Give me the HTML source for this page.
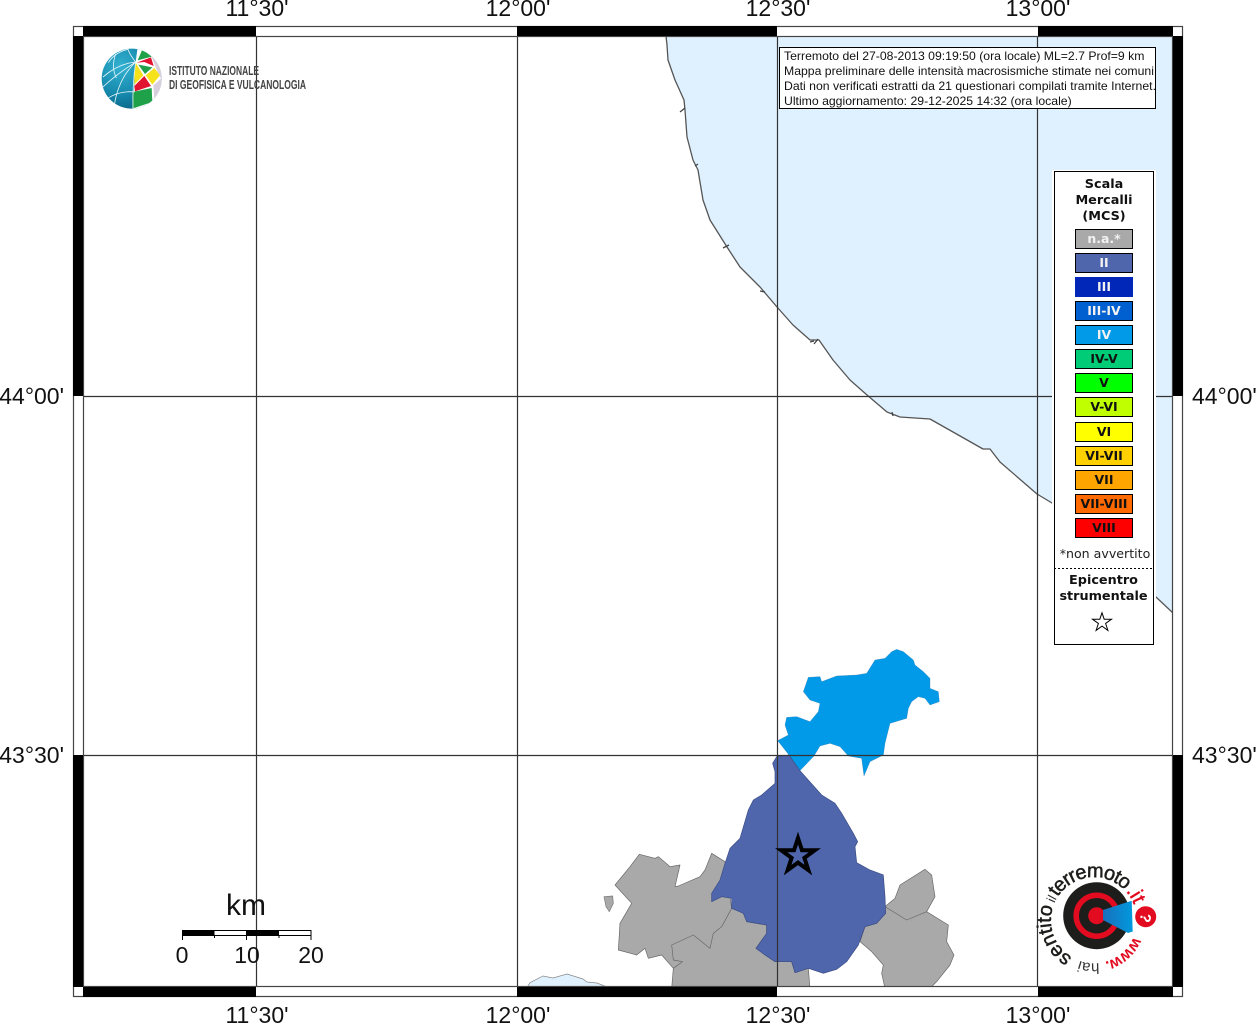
<!DOCTYPE html>
<html>
<head>
<meta charset="utf-8">
<style>
html,body{margin:0;padding:0;background:#fff;width:1256px;height:1024px;overflow:hidden}
svg{display:block}
text{font-family:"Liberation Sans",sans-serif}
.lab{font-size:23px;fill:#111}
.info{font-size:12.24px;fill:#111}
.dv{font-family:"DejaVu Sans",sans-serif;font-weight:bold;font-size:12.8px;fill:#111;text-anchor:middle}
.sw{font-family:"DejaVu Sans",sans-serif;font-weight:bold;font-size:12.5px;text-anchor:middle}
</style>
</head>
<body>
<svg width="1256" height="1024" viewBox="0 0 1256 1024" xmlns="http://www.w3.org/2000/svg">
<defs>
<clipPath id="map"><rect x="83" y="36" width="1090" height="951"/></clipPath>
<clipPath id="ib"><rect x="780" y="48" width="375.5" height="60"/></clipPath>
<radialGradient id="gl" cx=".32" cy=".3" r=".8"><stop offset="0" stop-color="#34b2d2"/><stop offset=".6" stop-color="#1487ab"/><stop offset="1" stop-color="#0a5f80"/></radialGradient>
<linearGradient id="wd" x1="0" y1="0" x2="1" y2="0"><stop offset="0" stop-color="#1a70bd"/><stop offset="1" stop-color="#0099dd"/></linearGradient>
<clipPath id="gc"><circle cx="110" cy="110" r="90"/></clipPath>
<path id="arcO" d="M1133.6 936.8 A43 43 0 1 1 1136.3 927.5"/>
</defs>

<rect width="1256" height="1024" fill="#fff"/>

<g clip-path="url(#map)">
<!-- Sea -->
<path fill="#dff1ff" d="M666 36L667 45L668 60L675 80L684 100L685 110L687 137L693 160L698 170L703 200L710 220L727 247L740 267L760 287L777 307L793 325L810 340L819 340L833 360L850 380L867 395L887 412L900 417L930 419L953 432L983 449L990 449L1000 462L1037 494L1052 503L1156 597L1173 613L1173 36Z"/>
<path fill="none" stroke="#555" stroke-width="1.3" stroke-linejoin="round" d="M666 36L667 45L668 60L675 80L684 100L685 110L687 137L693 160L698 170L703 200L710 220L727 247L740 267L760 287L777 307L793 325L810 340L819 340L833 360L850 380L867 395L887 412L900 417L930 419L953 432L983 449L990 449L1000 462L1037 494L1052 503L1156 597L1173 613"/>
<path fill="none" stroke="#444" stroke-width="1.3" d="M680 112L685 108M695 166L698 164M723 248L729 245M760 291L765 292M810 342L814 341M814 344L818 339M892 412L893 416"/>
<path fill="#dff1ff" stroke="#888" stroke-width=".7" d="M527.3 987L530 982.7L543 976L553 978L567 974L583 979L587 982L597 983L607 987Z"/>

<!-- Regions (zoom coordinates) -->
<g transform="translate(590 640) scale(.33333)" stroke-linejoin="round">
<path fill="#a9a9a9" stroke="#666" stroke-width="2" d="M148 643L195 655L205 650L240 680L270 675L255 740L265 738L330 710L345 690L365 640L405 665L425 805L460 810L470 845L530 855L530 880L498 925L555 965L605 965L615 998L655 985L660 1045L245 1045L250 985L215 945L175 955L165 925L140 945L85 930L90 850L125 790L75 735L120 680Z"/>
<path fill="none" stroke="#666" stroke-width="2" d="M425 805L395 860L370 880L360 925L310 885L245 915L250 960L278 965L250 985"/>
<path fill="#a9a9a9" stroke="#666" stroke-width="2" d="M885 800L915 775L930 735L1005 688L1025 705L1035 770L1010 815L1075 855L1070 905L1092 945L1080 975L1040 1025L1020 1045L885 1045L875 1000L880 975L845 935L810 905L825 860L860 850L887 820Z"/>
<path fill="none" stroke="#666" stroke-width="2" d="M885 800L950 840L1010 815"/>
<path fill="#a9a9a9" stroke="#777" stroke-width="2" d="M42 770L68 768L70 790L58 815L48 800Z"/>
<path fill="#009ae8" stroke="#3a7fb0" stroke-width="1" d="M920 28L940 35L970 60L975 75L1000 95L1020 115L1020 145L1045 155L1048 185L1020 195L1005 175L985 170L965 185L955 205L950 235L900 250L885 310L880 345L840 365L822 408L815 355L775 348L750 320L720 310L690 318L672 348L630 392L597 345L563 302L595 285L585 255L590 232L620 230L660 245L685 215L690 190L660 180L640 155L655 112L690 110L695 125L740 108L800 105L830 100L855 60L885 55L905 35Z"/>
<path fill="#4f66ad" stroke="#3a4c85" stroke-width="2" d="M597 345L630 392L695 465L735 490L755 520L790 580L803 605L795 620L800 668L840 690L880 705L885 770L887 820L860 850L825 860L805 915L770 965L740 988L700 1000L655 985L615 998L605 965L555 965L525 945L498 925L530 880L530 855L470 845L460 820L425 805L425 775L395 770L365 785L365 760L390 720L405 670L420 625L450 595L475 510L490 480L515 465L555 430L555 395L548 370L560 350Z"/>
</g>

<!-- Grid -->
<path fill="none" stroke="#333" stroke-width="1.2" d="M256.5 36V987M517.5 36V987M777.5 36V987M1037.5 36V987M83 396.5H1173M83 755.5H1173"/>
</g>

<!-- Frame -->
<rect x="73.5" y="26.5" width="1109" height="970" fill="none" stroke="#444" stroke-width="1.2"/>
<rect x="83.5" y="36.5" width="1089" height="950" fill="none" stroke="#444" stroke-width="1.2"/>
<g fill="#000">
<rect x="83" y="26" width="173" height="10"/><rect x="517" y="26" width="260" height="10"/><rect x="1038" y="26" width="135" height="10"/>
<rect x="83" y="987" width="173" height="10"/><rect x="517" y="987" width="260" height="10"/><rect x="1038" y="987" width="135" height="10"/>
<rect x="73" y="36" width="10" height="360"/><rect x="73" y="755" width="10" height="232"/>
<rect x="1173" y="36" width="10" height="360"/><rect x="1173" y="755" width="10" height="232"/>
</g>

<!-- Axis labels -->
<g class="lab" text-anchor="middle">
<text class="lab" x="257" y="16">11°30'</text><text class="lab" x="518" y="16">12°00'</text><text class="lab" x="778" y="16">12°30'</text><text class="lab" x="1038" y="16">13°00'</text>
<text class="lab" x="257" y="1023">11°30'</text><text class="lab" x="518" y="1023">12°00'</text><text class="lab" x="778" y="1023">12°30'</text><text class="lab" x="1038" y="1023">13°00'</text>
</g>
<text class="lab" x="64" y="404" text-anchor="end">44°00'</text>
<text class="lab" x="64" y="763" text-anchor="end">43°30'</text>
<text class="lab" x="1192" y="404">44°00'</text>
<text class="lab" x="1192" y="763">43°30'</text>

<!-- INGV logo -->
<g transform="translate(95 42) scale(.33333)">
<circle cx="110" cy="110" r="90" fill="url(#gl)"/>
<g clip-path="url(#gc)">
<path fill="#fff" d="M122 60L130 0L220 0L220 220L112 220Z"/>
<path fill="#d8cfdc" d="M165 32L198 70L206 120L192 100L176 60Z"/>
<path fill="#1fa14a" d="M128 55L142 22L170 44Z"/>
<path fill="#e1132f" d="M125 62L168 46L176 72L148 60Z"/>
<path fill="#1fa14a" d="M130 68L172 76L150 96Z"/>
<path fill="#f5e21a" d="M122 62L145 100L118 128L118 90Z"/>
<path fill="#e1132f" d="M118 132L148 102L168 132L120 148Z"/>
<path fill="#f5e21a" d="M152 100L178 78L195 100L172 128Z"/>
<path fill="#d8cfdc" d="M175 130L200 108L198 150L178 172Z"/>
<path fill="#1fa14a" d="M112 150L170 138L172 180L112 200Z"/>
<path fill="#e1132f" d="M174 180L190 162L182 192Z"/>
</g>
<g fill="none" stroke="#e6f5f9" stroke-width="2.5" clip-path="url(#gc)">
<path d="M122 60Q70 65 24 105"/><path d="M122 60Q70 110 58 190"/><path d="M122 60Q112 130 114 200"/><path d="M122 60Q105 40 98 20"/>
<path d="M62 36Q48 75 64 108"/><path d="M24 135Q60 100 122 60"/><path d="M36 170Q75 145 118 150"/><path d="M100 22Q60 30 40 62"/>
</g>
</g>
<text x="169" y="75" font-size="12.5" font-weight="bold" fill="#444" textLength="90" lengthAdjust="spacingAndGlyphs">ISTITUTO NAZIONALE</text>
<text x="169" y="89" font-size="12.5" font-weight="bold" fill="#444" textLength="137" lengthAdjust="spacingAndGlyphs">DI GEOFISICA E VULCANOLOGIA</text>

<!-- Info box -->
<rect x="779.5" y="47.5" width="376" height="61" fill="#fff" stroke="#000"/>
<g clip-path="url(#ib)">
<text class="info" x="784" y="60">Terremoto del 27-08-2013 09:19:50 (ora locale) ML=2.7 Prof=9 km</text>
<text class="info" x="784" y="75">Mappa preliminare delle intensità macrosismiche stimate nei comuni</text>
<text class="info" x="784" y="90">Dati non verificati estratti da 21 questionari compilati tramite Internet.</text>
<text class="info" x="784" y="105">Ultimo aggiornamento: 29-12-2025 14:32 (ora locale)</text>
</g>

<!-- Legend -->
<rect x="1052" y="170" width="104" height="476" fill="#fff"/>
<rect x="1054.5" y="171.5" width="99" height="473" fill="#fff" stroke="#000"/>
<text class="dv" x="1104" y="188">Scala</text>
<text class="dv" x="1104" y="204">Mercalli</text>
<text class="dv" x="1104" y="220">(MCS)</text>
<g stroke="#000">
<rect x="1075.5" y="229.5" width="57" height="19" fill="#a9a9a9"/>
<rect x="1075.5" y="253.5" width="57" height="19" fill="#4f66ad"/>
<rect x="1075.5" y="277.5" width="57" height="19" fill="#0027b8" stroke="#0027b8"/>
<rect x="1075.5" y="301.5" width="57" height="19" fill="#0060d0"/>
<rect x="1075.5" y="325.5" width="57" height="19" fill="#009ae8"/>
<rect x="1075.5" y="349.5" width="57" height="19" fill="#00cc77"/>
<rect x="1075.5" y="373.5" width="57" height="19" fill="#00ff00"/>
<rect x="1075.5" y="397.5" width="57" height="19" fill="#bfff00"/>
<rect x="1075.5" y="422.5" width="57" height="19" fill="#ffff00"/>
<rect x="1075.5" y="446.5" width="57" height="19" fill="#ffd000"/>
<rect x="1075.5" y="470.5" width="57" height="19" fill="#ffa500"/>
<rect x="1075.5" y="494.5" width="57" height="19" fill="#ff6a00"/>
<rect x="1075.5" y="518.5" width="57" height="19" fill="#ff0000"/>
</g>
<g fill="#f2f2f2">
<text class="sw" x="1104" y="243">n.a.*</text>
<text class="sw" x="1104" y="267">II</text>
<text class="sw" x="1104" y="291">III</text>
<text class="sw" x="1104" y="315">III-IV</text>
<text class="sw" x="1104" y="339">IV</text>
</g>
<g fill="#111">
<text class="sw" x="1104" y="363">IV-V</text>
<text class="sw" x="1104" y="387">V</text>
<text class="sw" x="1104" y="411">V-VI</text>
<text class="sw" x="1104" y="436">VI</text>
<text class="sw" x="1104" y="460">VI-VII</text>
<text class="sw" x="1104" y="484">VII</text>
<text class="sw" x="1104" y="508">VII-VIII</text>
<text class="sw" x="1104" y="532">VIII</text>
</g>
<text x="1105" y="558" text-anchor="middle" style="font-family:'DejaVu Sans',sans-serif;font-size:12.6px" fill="#222">*non avvertito</text>
<path d="M1054 568.5H1152" stroke="#000" stroke-dasharray="2 2" fill="none"/>
<text class="dv" x="1103.5" y="584">Epicentro</text>
<text class="dv" x="1103.5" y="600">strumentale</text>
<polygon points="1102,612.8 1104.2,619.2 1111.5,619.2 1105.6,623.5 1107.9,630.4 1102,626.1 1096.1,630.4 1098.4,623.5 1092.5,619.2 1099.8,619.2" fill="#fff" stroke="#000" stroke-width="1"/>

<!-- Epicentre star -->
<polygon points="798,838.1 802,850.3 814.8,850.3 804.4,857.9 808.4,870.1 798,862.6 787.6,870.1 791.6,857.9 781.2,850.3 794,850.3" fill="none" stroke="#000" stroke-width="4" stroke-miterlimit="10"/>

<!-- Scale -->
<text x="246" y="915" font-size="30" fill="#111" text-anchor="middle">km</text>
<rect x="182.5" y="930.5" width="128.5" height="5" fill="#fff" stroke="#000"/>
<rect x="182.5" y="930.5" width="32" height="5" fill="#000"/>
<rect x="246.5" y="930.5" width="32.5" height="5" fill="#000"/>
<path d="M182.5 930V940M214.5 936V938M246.5 930V940M279 936V938M311 930V940" stroke="#000" fill="none"/>
<text class="lab" x="182" y="963" text-anchor="middle">0</text>
<text class="lab" x="247" y="963" text-anchor="middle">10</text>
<text class="lab" x="311" y="963" text-anchor="middle">20</text>

<!-- Hai sentito il terremoto logo -->
<circle cx="1096.7" cy="915.7" r="33.5" fill="#1d1d1b"/>
<circle cx="1096.7" cy="915.7" r="20.5" fill="none" stroke="#e30b20" stroke-width="5.5"/>
<circle cx="1096.7" cy="915.7" r="8.5" fill="#e30b20"/>
<path d="M1103 910L1131.7 900.7L1132.7 931.5L1128 933L1103 920Z" fill="url(#wd)"/>
<circle cx="1145.7" cy="916.7" r="10.5" fill="#e30b20"/>
<text x="0" y="0" transform="translate(1140.5 917) rotate(100)" font-size="15" font-weight="bold" fill="#fff" text-anchor="middle">?</text>
<g>
<text font-size="16" font-weight="bold" fill="#e30b20"><textPath href="#arcO" startOffset="0" style="letter-spacing:-.5px">www.</textPath></text>
<text font-size="15" fill="#333"><textPath href="#arcO" startOffset="45">hai</textPath></text>
<text font-size="20" fill="#1d1d1b" stroke="#1d1d1b" stroke-width=".5"><textPath href="#arcO" startOffset="73">sentito</textPath></text>
<text font-size="13" fill="#333"><textPath href="#arcO" startOffset="135">il</textPath></text>
<text font-size="20" fill="#1d1d1b" stroke="#1d1d1b" stroke-width=".5"><textPath href="#arcO" startOffset="142" style="letter-spacing:-1px">terremoto</textPath></text>
<text font-size="20" fill="#e30b20" stroke="#e30b20" stroke-width=".5"><textPath href="#arcO" startOffset="221">.it</textPath></text>
</g>
</svg>
</body>
</html>
